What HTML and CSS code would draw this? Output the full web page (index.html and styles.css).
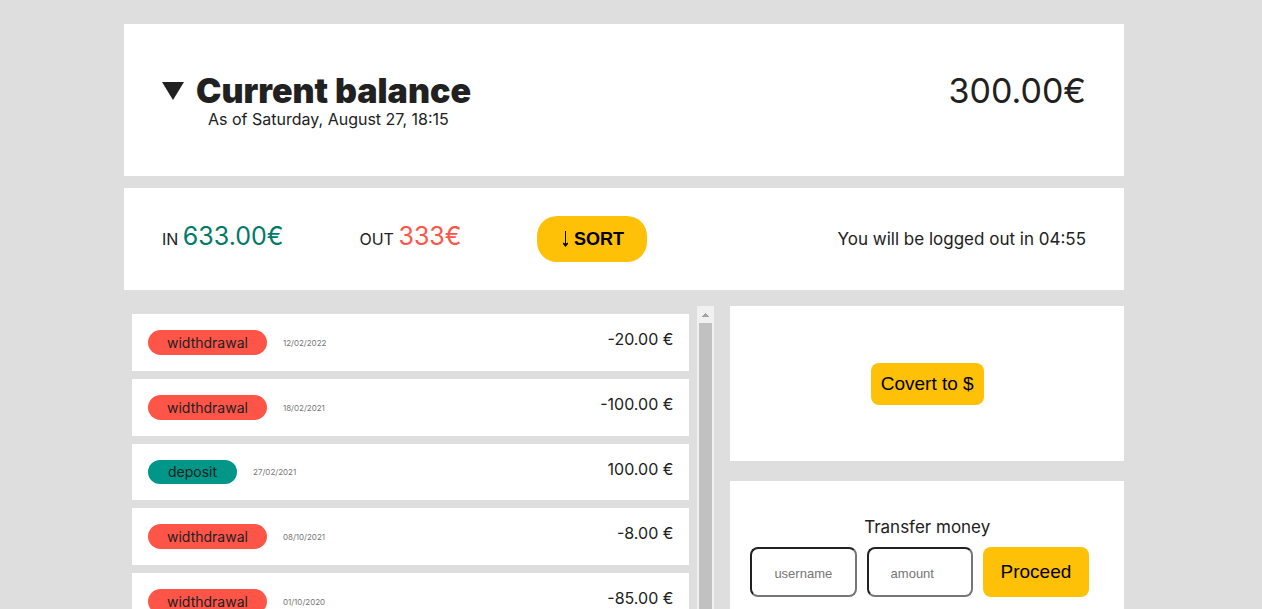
FILE: index.html
```html
<!DOCTYPE html>
<html lang="en">
<head>
<meta charset="utf-8">
<title>Current balance</title>
<link rel="stylesheet" href="styles.css">
</head>
<body>
<main class="app">
  <header class="card balance">
    <details class="balance-details" open>
      <summary class="balance-summary">
        <svg class="marker" viewBox="0 0 22 18" aria-hidden="true"><path d="M0 0H22L11 18Z" fill="currentColor"/></svg>
        <h1 class="balance-title">Current balance</h1>
      </summary>
      <p class="balance-date">As of Saturday, August 27, 18:15</p>
    </details>
    <p class="balance-value">300.00€</p>
  </header>

  <section class="card summary">
    <p class="flow">IN <span class="flow-value flow-in">633.00€</span></p>
    <p class="flow">OUT <span class="flow-value flow-out">333€</span></p>
    <button class="btn btn-sort" type="button">
      <svg class="arrow" viewBox="0 0 8 16" aria-hidden="true"><path d="M4 0H5V12.5L7 11.5V13L4.500 16L2 13V11.500L4 12.5Z" fill="currentColor"/></svg>
      SORT
    </button>
    <p class="timer">You will be logged out in 04:55</p>
  </section>

  <div class="columns">
    <section class="movements">
      <ul class="list">
        <li class="row"><span class="pill pill-out">widthdrawal</span><time class="date">12/02/2022</time><span class="amount">-20.00 €</span></li>
        <li class="row"><span class="pill pill-out">widthdrawal</span><time class="date">18/02/2021</time><span class="amount">-100.00 €</span></li>
        <li class="row"><span class="pill pill-in">deposit</span><time class="date">27/02/2021</time><span class="amount">100.00 €</span></li>
        <li class="row"><span class="pill pill-out">widthdrawal</span><time class="date">08/10/2021</time><span class="amount">-8.00 €</span></li>
        <li class="row"><span class="pill pill-out">widthdrawal</span><time class="date">01/10/2020</time><span class="amount">-85.00 €</span></li>
      </ul>
      <div class="scrollbar" aria-hidden="true">
        <svg class="scroll-up" viewBox="0 0 17 17"><path d="M5 11H12V10H11V9H10V8H9V7H8V8H7V9H6V10H5Z" fill="#a3a3a3"/></svg>
        <div class="thumb"></div>
      </div>
    </section>

    <aside class="side">
      <section class="card convert">
        <button class="btn btn-convert" type="button">Covert to $</button>
      </section>
      <section class="card transfer">
        <h2 class="transfer-title">Transfer money</h2>
        <form class="transfer-form">
          <input class="field" type="text" placeholder="username" aria-label="username">
          <input class="field" type="text" placeholder="amount" aria-label="amount">
          <button class="btn btn-proceed" type="button">Proceed</button>
        </form>
      </section>
    </aside>
  </div>
</main>
</body>
</html>
```
FILE: styles.css
```css
* { box-sizing: border-box; margin: 0; padding: 0; }

body {
  padding: 24px 14px 0 0;
  background: #dedede;
  color: #212121;
  font-family: Inter, "Liberation Sans", sans-serif;
  font-size: 16px;
  line-height: 20px;
}

.app { max-width: 1000px; margin: 0 auto; }
.card { background: #fff; }

.balance {
  display: flex;
  justify-content: space-between;
  padding: 48px 38px;
  margin-bottom: 12px;
}
.balance-summary {
  display: flex;
  align-items: center;
  gap: 12px;
  list-style: none;
  cursor: pointer;
}
.marker { width: 22px; height: 18px; }
.balance-title { font-size: 34px; font-weight: 900; line-height: 38px; }
.balance-date { padding-left: 46px; line-height: 18px; }
.balance-value { font-size: 34px; line-height: 38px; }

.summary {
  display: flex;
  align-items: center;
  gap: 76px;
  padding: 28px 38px;
  margin-bottom: 16px;
}
.flow { padding-bottom: 4px; line-height: 32px; }
.flow-value { font-size: 25px; }
.flow-in { color: #00796b; }
.flow-out { color: #ff5549; }
.timer { margin-left: auto; font-size: 17px; }

.btn {
  border: 0;
  background: #ffc107;
  color: #000;
  font-family: "Liberation Sans", Arial, sans-serif;
  font-size: 19px;
  cursor: pointer;
}
.btn-sort {
  display: flex;
  align-items: center;
  justify-content: center;
  gap: 5px;
  width: 110px;
  height: 46px;
  border-radius: 20px;
  font-size: 18px;
  font-weight: 700;
}
.arrow { width: 8px; height: 16px; }

.columns { display: grid; grid-template-columns: 3fr 2fr; gap: 16px; }

.movements { display: flex; }
.list { flex: 1; display: flex; flex-direction: column; gap: 8px; padding: 8px; list-style: none; }
.row { display: flex; align-items: center; gap: 16px; padding: 16px; background: #fff; }
.pill {
  padding: 0 19px;
  border-radius: 13px;
  font-size: 14px;
  line-height: 25px;
}
.pill-out { background: #ff5549; }
.pill-in { padding: 0 20px; background: #009688; line-height: 24px; }
.date { color: #757575; font-size: 8px; }
.amount { align-self: flex-start; margin-left: auto; line-height: 18px; }

.scrollbar { display: flex; flex-direction: column; width: 17px; background: #f1f1f1; }
.scroll-up { width: 17px; height: 17px; }
.thumb { flex: 1; margin: 0 2px; background: #c1c1c1; }

.side { display: flex; flex-direction: column; gap: 20px; }
.convert { display: flex; justify-content: center; padding: 57px 20px 56px; }
.btn-convert { padding: 0 10px; height: 42px; border-radius: 8px; }
.transfer { flex: 1; padding: 36px 35px 36px 20px; }
.transfer-title { padding-left: 15px; font-size: 17px; font-weight: 400; text-align: center; }
.transfer-form { display: grid; grid-template-columns: repeat(3, 1fr); gap: 10px; margin-top: 10px; }
.field {
  min-width: 0;
  height: 50px;
  padding: 2px 22px 0;
  border: 2px inset #767676;
  border-radius: 8px;
  font-family: "Liberation Sans", Arial, sans-serif;
  font-size: 13px;
}
.field::placeholder { color: #757575; }
.btn-proceed { border-radius: 8px; }
```
